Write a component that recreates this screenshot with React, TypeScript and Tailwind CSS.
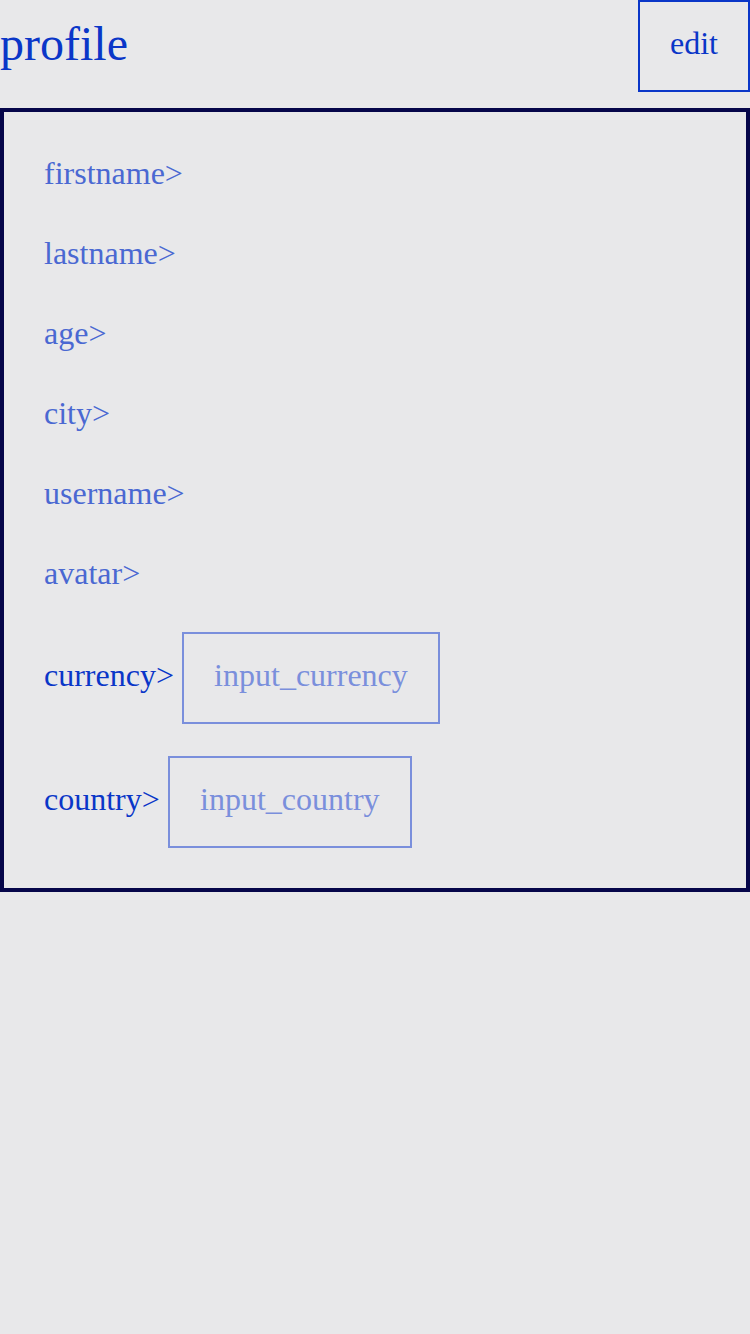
const serif = "font-['Liberation_Serif','Times_New_Roman',serif]";

const fields = ["firstname", "lastname", "age", "city", "username", "avatar"];

function InputRow({ label, placeholder, width }: { label: string; placeholder: string; width: string }) {
  return (
    <div className="flex h-[92px] items-center">
      <span className="pb-[6px] text-[32px] leading-none text-[#0a36c8]">{label}&gt;</span>
      <div
        className={`ml-2 flex h-[92px] items-center justify-center border-2 border-[#7a8fdc] pb-[6px] text-[32px] leading-none text-[#7a8fdc] ${width}`}
      >
        {placeholder}
      </div>
    </div>
  );
}

export default function App() {
  return (
    <div className={`min-h-[1334px] w-[750px] bg-[#e8e8ea] ${serif}`}>
      <header className="flex h-[92px] items-start justify-between">
        <h1 className="mt-[16px] text-[48px] leading-[56px] text-[#0a36c8]">profile</h1>
        <button className="flex h-[92px] items-center border-2 border-[#0a36c8] px-[30px] pb-[6px] text-[32px] leading-none text-[#0a36c8]">
          edit
        </button>
      </header>

      <section className="mt-4 flex flex-col gap-8 border-4 border-[#06064a] px-10 pt-[37px] pb-10">
        {fields.map((f) => (
          <div key={f} className="flex h-12 items-center text-[32px] leading-none text-[#4a68d2]">
            {f}&gt;
          </div>
        ))}
        <div className="mt-[3px] flex flex-col gap-8">
          <InputRow label="currency" placeholder="input_currency" width="w-[258px]" />
          <InputRow label="country" placeholder="input_country" width="w-[244px]" />
        </div>
      </section>
    </div>
  );
}
